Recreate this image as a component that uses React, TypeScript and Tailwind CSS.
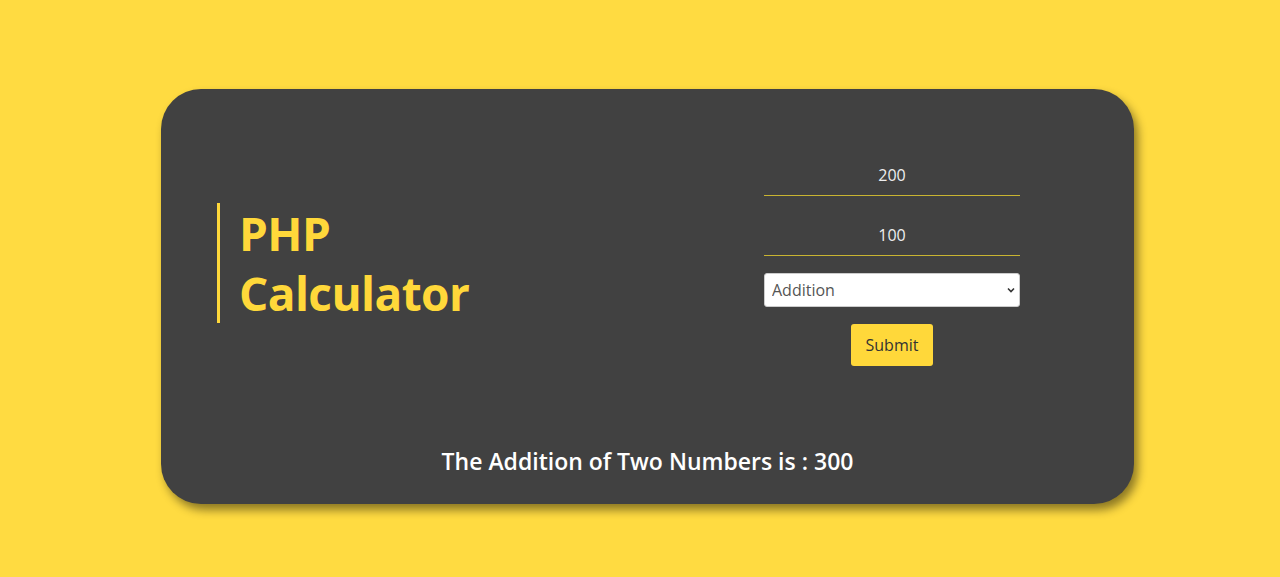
import { useState } from 'react';

export default function App() {
  const [a, setA] = useState('200');
  const [b, setB] = useState('100');
  const [op, setOp] = useState('Addition');

  return (
    <main className="min-h-[577px] w-full bg-[#ffdb41] pt-[89px] font-['Open_Sans',sans-serif]">
      <div className="ml-[161px] w-[973px] h-[415px] rounded-[40px] bg-[#414141] shadow-[4px_6px_10px_rgba(0,0,0,0.45)] flex flex-col">
        {/* title + form */}
        <div className="h-[348px] flex items-center">
          <div className="ml-[56px] border-l-[3px] border-[#ffd83a] pl-[19px]">
            <h1 className="text-[46px] leading-[60px] font-bold text-[#ffd83a] tracking-[-0.6px]">
              PHP
              <br />
              Calculator
            </h1>
          </div>

          <form className="ml-auto mr-[114px] w-[256px] flex flex-col items-center" onSubmit={(e) => e.preventDefault()}>
            <input
              value={a}
              onChange={(e) => setA(e.target.value)}
              className="w-full h-[35px] pb-[5px] bg-transparent text-center text-[16px] text-[#eeeeee] outline-none"
            />
            <div className="w-full h-[1px] bg-[#c8b431]" />
            <input
              value={b}
              onChange={(e) => setB(e.target.value)}
              className="mt-[24px] w-full h-[35px] pb-[5px] bg-transparent text-center text-[16px] text-[#eeeeee] outline-none"
            />
            <div className="w-full h-[1px] bg-[#c8b431]" />
            <div className="relative mt-[17px] w-full">
              <select
                value={op}
                onChange={(e) => setOp(e.target.value)}
                className="w-full h-[34px] appearance-none rounded-[3px] bg-white pl-[7px] text-[16px] text-[#555555] outline-none border border-[#cccccc]"
              >
                <option>Addition</option>
                <option>Subtraction</option>
                <option>Multiplication</option>
                <option>Division</option>
              </select>
              <svg className="pointer-events-none absolute right-[4px] top-[13px]" width="10" height="8" viewBox="0 0 10 8">
                <path d="M2 2.5 L5 5.5 L8 2.5" fill="none" stroke="#333" strokeWidth="1.6" />
              </svg>
            </div>
            <button
              type="submit"
              className="mt-[17px] w-[82px] h-[42px] rounded-[3px] bg-[#ffd83a] text-[16px] text-[#333333]"
            >
              Submit
            </button>
          </form>
        </div>

        <p className="mt-[9px] text-center text-[23px] leading-[30px] font-semibold text-white">
          The Addition of Two Numbers is : 300
        </p>
      </div>
    </main>
  );
}
